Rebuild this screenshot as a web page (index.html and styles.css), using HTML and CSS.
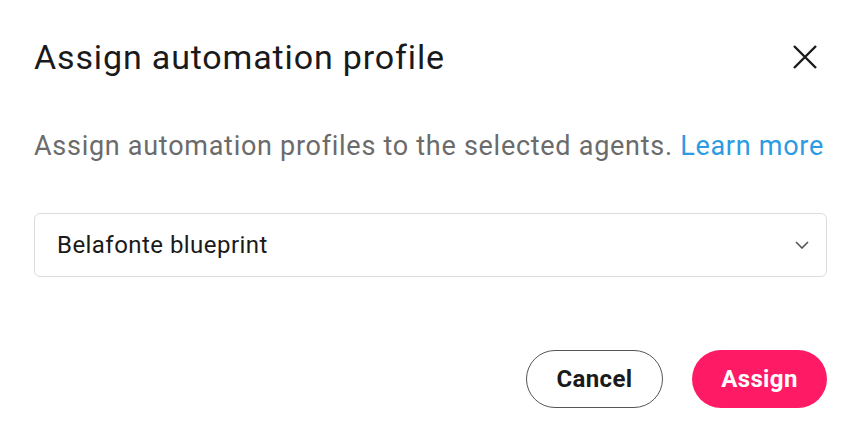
FILE: index.html
```html
<!DOCTYPE html>
<html>
<head>
<meta charset="utf-8">
<link rel="stylesheet" href="styles.css">
</head>
<body>
<div class="dialog">
  <div class="header">
    <h1 class="title">Assign automation profile</h1>
    <button class="close" aria-label="Close">
      <svg width="24" height="24" viewBox="0 0 24 24"><path d="M1 1L23 23M23 1L1 23" stroke="#1a1a1a" stroke-width="2.4" fill="none"/></svg>
    </button>
  </div>
  <p class="desc">Assign automation profiles to the selected agents. <a class="link" href="#">Learn more</a></p>
  <div class="select">
    <span class="value">Belafonte blueprint</span>
    <svg class="chev" width="14" height="8" viewBox="0 0 14 8"><path d="M1 1L7 7L13 1" stroke="#555" stroke-width="1.6" fill="none"/></svg>
  </div>
  <div class="actions">
    <button class="btn cancel">Cancel</button>
    <button class="btn assign">Assign</button>
  </div>
</div>
</body>
</html>
```
FILE: styles.css
```css
html, body { margin: 0; padding: 0; background: #fff; }
body { font-family: Roboto, "Noto Sans", sans-serif; width: 860px; height: 440px; overflow: hidden; }
.dialog { padding: 36px 33px 0 34px; display: flex; flex-direction: column; }
.header { display: flex; justify-content: space-between; align-items: center; height: 42px; }
.title { margin: 0; font-size: 34px; font-weight: 400; color: #1a1a1a; letter-spacing: 0.85px; }
.close { background: none; border: 0; padding: 0; width: 24px; height: 24px; margin-right: 10px; display: flex; }
.desc { margin: 52px 0 0; font-size: 27px; line-height: 32px; color: #6b6b6b; letter-spacing: 0.72px; white-space: nowrap; }
.link { color: #2b9be2; text-decoration: none; }
.select { margin-top: 51px; height: 62px; border: 1px solid #dcdcdc; border-radius: 6px; display: flex; align-items: center; justify-content: space-between; padding: 0 17px 0 22px; }
.value { font-size: 24px; color: #1a1a1a; letter-spacing: 0.45px; }
.actions { margin-top: 73px; display: flex; justify-content: flex-end; gap: 29px; }
.btn { height: 58px; border-radius: 29px; font-family: Roboto, sans-serif; font-weight: 700; font-size: 24px; letter-spacing: 0.4px; padding: 0; }
.cancel { width: 137px; background: #fff; border: 1px solid #555; color: #1a1a1a; }
.assign { width: 135px; background: #ff1a66; border: 0; color: #fff; }
```
